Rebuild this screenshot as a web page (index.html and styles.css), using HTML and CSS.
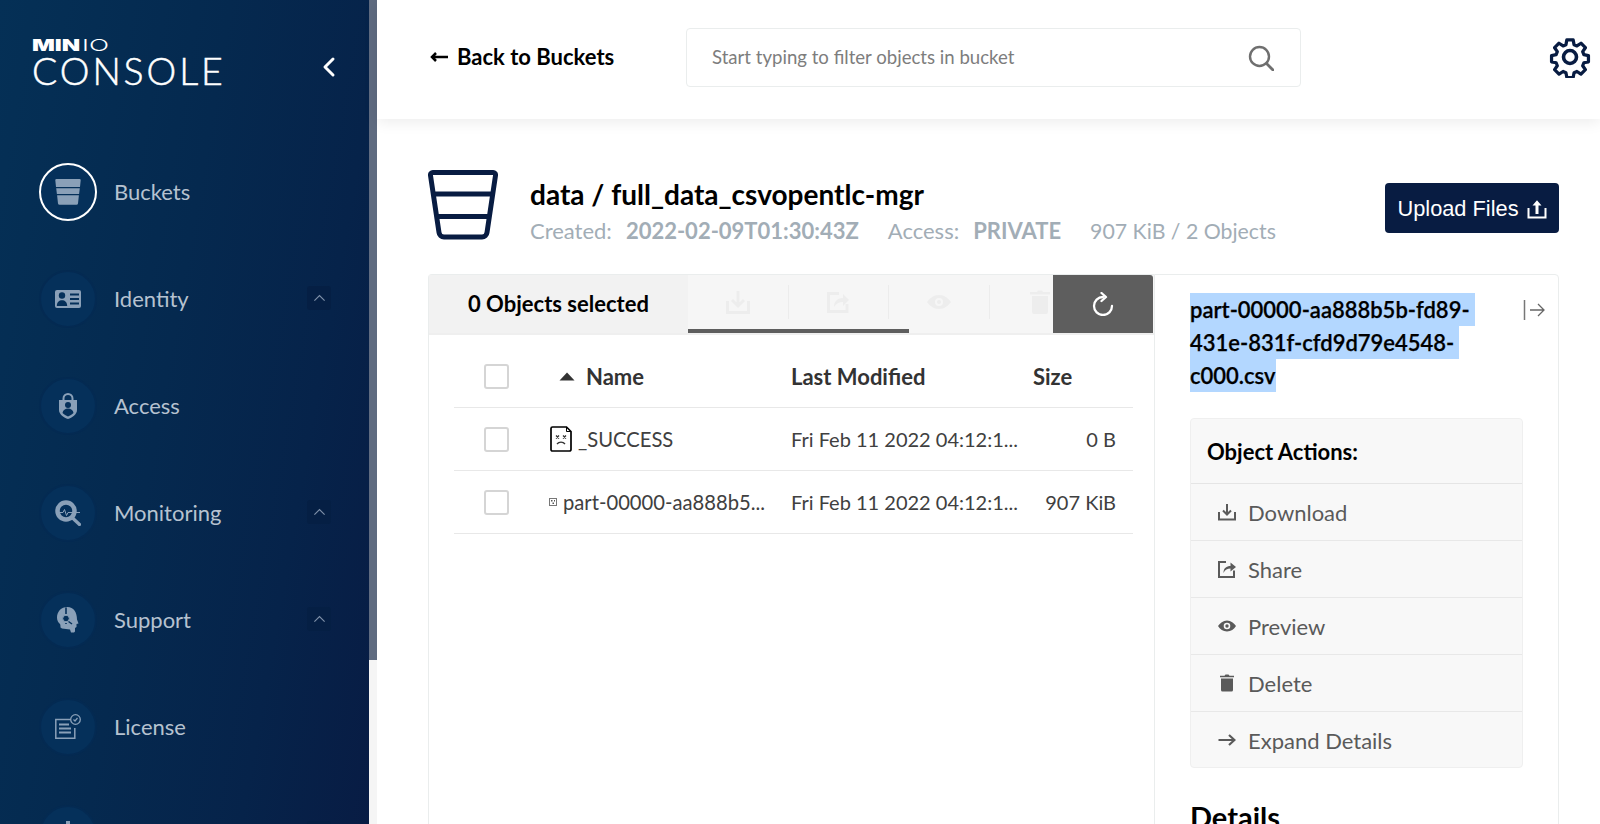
FILE: index.html
```html
<!DOCTYPE html>
<html lang="en">
<head>
<meta charset="utf-8">
<title>MinIO Console</title>
<link rel="stylesheet" href="styles.css">
</head>
<body>
<div class="app">
  <aside class="sidebar">
    <div class="brand">
      <div class="logo">
        <div class="logo-top"><span class="logo-min">MIN</span><span class="logo-io">IO</span></div>
        <div class="logo-console">CONSOLE</div>
      </div>
      <svg class="collapse" viewBox="0 0 14 22"><path d="M11 3 3 11l8 8" fill="none" stroke="#fff" stroke-width="3" stroke-linecap="round" stroke-linejoin="round"/></svg>
    </div>
    <nav class="nav">
      <div class="nav-item">
        <span class="nav-circle nav-circle-active">
          <svg class="nav-icon" viewBox="0 0 26 26"><path d="M1.500 0h23a1.200 1.200 0 0 1 1.200 1.300L25 8H1L.3 1.300A1.200 1.200 0 0 1 1.500 0ZM1.200 9.200h23.600l-.7 5.800H1.900ZM2.100 16.200h21.800l-.9 8.300a1.600 1.600 0 0 1-1.600 1.300H4.600A1.600 1.600 0 0 1 3 24.500Z" fill="#8aa0b8"/></svg>
        </span>
        <span class="nav-label">Buckets</span>
      </div>
      <div class="nav-item">
        <span class="nav-circle">
          <svg class="nav-icon" viewBox="0 0 26 26"><path d="M2 4h22a2 2 0 0 1 2 2v14a2 2 0 0 1-2 2H2a2 2 0 0 1-2-2V6a2 2 0 0 1 2-2Z" fill="#8aa0b8"/><circle cx="7" cy="9.500" r="3.200" fill="#05305a"/><path d="M1.800 20c0-4 2.400-5.800 5.200-5.800s5.200 1.800 5.200 5.800Z" fill="#05305a"/><path d="M15 8.500h9M15 13h9M15 17.500h9" stroke="#05305a" stroke-width="1.800"/></svg>
        </span>
        <span class="nav-label">Identity</span>
        <span class="nav-toggle"><svg viewBox="0 0 14 8"><path d="m1.500 6.800 5.500-5.300 5.500 5.300" fill="none" stroke="#7d8fa8" stroke-width="1.300"/></svg></span>
      </div>
      <div class="nav-item">
        <span class="nav-circle">
          <svg class="nav-icon" viewBox="0 0 26 26"><path d="M13 0a5.500 5.500 0 0 1 5.500 5.500V7h3.500v10c0 4.500-5 7.700-9 9-4-1.300-9-4.500-9-9V7h3.500V5.500A5.500 5.500 0 0 1 13 0Zm0 2a3.500 3.500 0 0 0-3.500 3.500V7h7V5.500A3.500 3.500 0 0 0 13 2Z" fill="#8aa0b8"/><circle cx="13" cy="12" r="3" fill="#05305a"/><path d="M7.500 20c.4-3 2.800-4.500 5.500-4.500s5.100 1.500 5.500 4.500c-1.500 1.500-3.500 2.800-5.500 3.500-2-.7-4-2-5.500-3.500Z" fill="#05305a"/></svg>
        </span>
        <span class="nav-label">Access</span>
      </div>
      <div class="nav-item">
        <span class="nav-circle">
          <svg class="nav-icon" viewBox="0 0 26 26"><circle cx="11" cy="11" r="8.500" fill="none" stroke="#8aa0b8" stroke-width="4.500"/><path d="m16.500 17 8 7.500" stroke="#8aa0b8" stroke-width="3.200" stroke-linecap="round"/><path d="M5 12.500h3l1.500-3 2 6 1.500-3h12" fill="none" stroke="#8aa0b8" stroke-width="1"/></svg>
        </span>
        <span class="nav-label">Monitoring</span>
        <span class="nav-toggle"><svg viewBox="0 0 14 8"><path d="m1.500 6.800 5.500-5.300 5.500 5.300" fill="none" stroke="#7d8fa8" stroke-width="1.300"/></svg></span>
      </div>
      <div class="nav-item">
        <span class="nav-circle">
          <svg class="nav-icon" viewBox="0 0 26 26"><path d="M12.500 0C6 0 2 4.800 2 10.500c0 3 1.200 5 3 6.500.5 1 .5 2.500.5 3.500l1.500 1 8 1 1 3h3l1-1v-3.500l1.500-1V17l2-.5-1.500-4C22 5 18.500 0 12.500 0Z" fill="#8aa0b8"/><path d="M11 .5v6.500M11 17v-1" stroke="#05305a" stroke-width="1.600"/><circle cx="11" cy="11.500" r="3.300" fill="#05305a" stroke="#8aa0b8" stroke-width="1"/><path d="M13.500 14.500 17 17" stroke="#05305a" stroke-width="1.500"/></svg>
        </span>
        <span class="nav-label">Support</span>
        <span class="nav-toggle"><svg viewBox="0 0 14 8"><path d="m1.500 6.800 5.500-5.300 5.500 5.300" fill="none" stroke="#7d8fa8" stroke-width="1.300"/></svg></span>
      </div>
      <div class="nav-item">
        <span class="nav-circle">
          <svg class="nav-icon" viewBox="0 0 26 26"><path d="M16 5.500H.8v18.700h19V14" fill="none" stroke="#8aa0b8" stroke-width="1.500"/><path d="M4 10.500h10M4 14.500h12M4 18.500h12" stroke="#8aa0b8" stroke-width="1.800"/><circle cx="20.500" cy="5.500" r="4.800" fill="none" stroke="#8aa0b8" stroke-width="1.300"/><path d="m18.500 5.500 1.500 1.500 2.500-3" fill="none" stroke="#8aa0b8" stroke-width="1.200"/></svg>
        </span>
        <span class="nav-label">License</span>
      </div>
      <div class="nav-item">
        <span class="nav-circle">
          <svg class="nav-icon" viewBox="0 0 26 26"><path d="M11 0h4v6h-4ZM6 8h14v10H6Z" fill="#8aa0b8"/></svg>
        </span>
        <span class="nav-label"></span>
        <span class="nav-toggle"></span>
      </div>
    </nav>
  </aside>
  <div class="scroll-track"><div class="scroll-thumb"></div></div>
  <main class="main">
    <header class="topbar">
      <div class="back"><span class="back-arrow"><svg viewBox="0 0 18 12"><path d="M18 6H2M6 2 2 6l4 4" fill="none" stroke="#000" stroke-width="2.500"/></svg></span>Back to Buckets</div>
      <div class="search">
        <span class="search-text">Start typing to filter objects in bucket</span>
        <svg class="search-icon" viewBox="0 0 26 26"><circle cx="11.500" cy="11.500" r="9.500" fill="none" stroke="#6f6f6f" stroke-width="2.400"/><path d="m18.500 18.500 6.500 6.500" stroke="#6f6f6f" stroke-width="2.800" stroke-linecap="round"/></svg>
      </div>
      <svg class="gear" viewBox="0 0 42 42"><g fill="none" stroke="#081c42" stroke-width="3.600" stroke-linejoin="round"><circle cx="21" cy="21" r="6.500"/><path d="M17.500 2h7l1 5.300 3.200 1.400 4.500-3 4.900 5-3 4.400 1.300 3.300 5.100 1v7l-5.100 1-1.300 3.300 3 4.400-4.900 5-4.500-3-3.200 1.400-1 5.300h-7l-1-5.300-3.200-1.400-4.500 3-4.900-5 3-4.400-1.300-3.300-5.100-1v-7l5.100-1 1.300-3.300-3-4.400 4.900-5 4.500 3 3.200-1.400Z" transform="translate(2.100 2.100) scale(.9)"/></g></svg>
    </header>
    <section class="content">
      <div class="title-row">
        <svg class="bucket" viewBox="0 0 70 70"><path d="M5 2.500h60a2.500 2.500 0 0 1 2.500 3L59 62.500a5 5 0 0 1-5 4.500H16a5 5 0 0 1-5-4.500L2.500 5.500a2.500 2.500 0 0 1 2.500-3ZM5 24h60M9 46.500h52" fill="none" stroke="#081c42" stroke-width="5" stroke-linejoin="round"/></svg>
        <div class="title-block">
          <h1 class="title">data / full_data_csvopentlc-mgr</h1>
          <div class="meta">
            <span>Created:</span><b class="meta-value">2022-02-09T01:30:43Z</b>
            <span class="meta-gap">Access:</span><b class="meta-value">PRIVATE</b>
            <span class="meta-gap meta-usage">907 KiB / 2 Objects</span>
          </div>
        </div>
        <div class="upload">Upload Files
          <svg class="upload-icon" viewBox="0 0 20 20"><path d="M1.500 9v9.500h17V9" fill="none" stroke="#fff" stroke-width="2"/><path d="M10 1.200 14.500 6.500H11.500V15H8.500V6.500H5.500Z" fill="#fff"/></svg>
        </div>
      </div>
      <div class="panels">
        <div class="list-panel">
          <div class="toolbar">
            <div class="selected-count">0 Objects selected</div>
            <div class="tool-group">
              <div class="tools">
                <span class="tool"><svg viewBox="0 0 24 24"><path d="M1.500 11v11.500h21V11" fill="none" stroke="#ededed" stroke-width="3"/><path d="M12 1v14M6 10l6 6 6-6" fill="none" stroke="#ededed" stroke-width="3"/></svg></span>
                <span class="tool"><svg viewBox="0 0 24 24"><path d="M21 14v7.500H2.500V3.500H13" fill="none" stroke="#ededed" stroke-width="3"/><path d="M8 17c0-6 4-9 9-9V4l6 6-6 6v-4c-4 0-7 1.500-9 5Z" fill="#ededed"/></svg></span>
                <span class="tool"><svg viewBox="0 0 24 24"><path fill-rule="evenodd" d="M12 5c5.500 0 9.500 3.500 12 7-2.500 3.500-6.500 7-12 7S2.500 15.500 0 12c2.500-3.500 6.500-7 12-7Zm0 3a4 4 0 1 0 0 8 4 4 0 0 0 0-8Z" fill="#ededed"/><circle cx="12" cy="12" r="2" fill="#ededed"/></svg></span>
                <span class="tool tool-last"><svg viewBox="0 0 24 24"><path d="M4 6h16v16a2 2 0 0 1-2 2H6a2 2 0 0 1-2-2ZM2 2h7l1-1.500h4L15 2h7v2.500H2Z" fill="#ededed"/></svg></span>
              </div>
              <div class="tool-line"><span class="tool-line-active"></span></div>
            </div>
            <div class="refresh"><svg viewBox="0 0 24 24"><path d="M12 5A9 9 0 1 0 21 14" fill="none" stroke="#fff" stroke-width="2.300" stroke-linecap="round"/><path d="M10.500 1 15 5l-4.500 4" fill="none" stroke="#fff" stroke-width="2.300" stroke-linecap="round" stroke-linejoin="round"/></svg></div>
          </div>
          <div class="table">
            <div class="row row-head">
              <span class="cell-check"><span class="checkbox"></span></span>
              <span class="cell-name cell-name-head"><svg class="sort" viewBox="0 0 16 9"><path d="M8 .5 15.500 8.500H.5Z" fill="#333"/></svg>Name</span>
              <span class="cell-date">Last Modified</span>
              <span class="cell-size cell-size-head">Size</span>
            </div>
            <div class="row">
              <span class="cell-check"><span class="checkbox"></span></span>
              <span class="cell-name cell-name-success">
                <svg class="file-icon" viewBox="0 0 22 26"><path d="M2.500 1h14L21 5.500v18a1.500 1.500 0 0 1-1.500 1.500h-17A1.500 1.500 0 0 1 1 23.500v-21A1.500 1.500 0 0 1 2.500 1Z" fill="none" stroke="#000" stroke-width="1.700"/><path d="M16.500 1v4.500H21" fill="none" stroke="#000" stroke-width="1"/><path d="m6 9.500 3 3m0-3-3 3m7-3 3 3m0-3-3 3M7 18c2-2.500 6-2.500 8 0" fill="none" stroke="#333" stroke-width="1.300"/></svg>
                _SUCCESS
              </span>
              <span class="cell-date">Fri Feb 11 2022 04:12:1...</span>
              <span class="cell-size">0 B</span>
            </div>
            <div class="row">
              <span class="cell-check"><span class="checkbox"></span></span>
              <span class="cell-name cell-name-part">
                <svg class="file-mini" viewBox="0 0 8 8"><rect x=".5" y=".5" width="7" height="7" fill="#fff" stroke="#777"/><path d="M2 2h1.500v1.500H2ZM5 2h1v1.500H5ZM3.500 4.500H5V6H3.500Z" fill="#555"/></svg>
                part-00000-aa888b5...
              </span>
              <span class="cell-date">Fri Feb 11 2022 04:12:1...</span>
              <span class="cell-size">907 KiB</span>
            </div>
          </div>
        </div>
        <aside class="detail-panel">
          <div class="detail-head">
            <div class="detail-name">
              <span class="selection sel-1">part-00000-aa888b5b-fd89-</span>
              <span class="selection sel-2">431e-831f-cfd9d79e4548-</span>
              <span class="selection sel-3">c000.csv</span>
            </div>
            <svg class="detail-close" viewBox="0 0 22 22"><path d="M1.500 1v20" stroke="#777" stroke-width="1.500"/><path d="M7 11h14M15 5l6 6-6 6" fill="none" stroke="#666" stroke-width="1.300"/></svg>
          </div>
          <div class="actions">
            <div class="actions-title">Object Actions:</div>
            <div class="action"><svg viewBox="0 0 18 18"><path d="M1 9v7.500h16V9" fill="none" stroke="#5a5a5a" stroke-width="2"/><path d="M9 1v10M5 7.500l4 4 4-4" fill="none" stroke="#5a5a5a" stroke-width="2"/></svg>Download</div>
            <div class="action"><svg viewBox="0 0 18 18"><path d="M16 10.500V17H1V2h7" fill="none" stroke="#5a5a5a" stroke-width="2"/><path d="M5.500 13c0-5 3-7 7-7V2.500L18 7l-5.500 4.500V8.500c-3 0-5.500 1-7 4.500Z" fill="#5a5a5a"/></svg>Share</div>
            <div class="action"><svg viewBox="0 0 18 18"><path fill-rule="evenodd" d="M9 3.500c4 0 7 2.500 9 5.500-2 3-5 5.500-9 5.500S2 12 0 9c2-3 5-5.500 9-5.500Zm0 2.200a3.300 3.300 0 1 0 0 6.600 3.300 3.300 0 0 0 0-6.600Z" fill="#5a5a5a"/><circle cx="9" cy="9" r="1.700" fill="#5a5a5a"/></svg>Preview</div>
            <div class="action"><svg viewBox="0 0 18 18"><path d="M3 4.500h12V16a1.500 1.500 0 0 1-1.500 1.500h-9A1.500 1.500 0 0 1 3 16ZM2 1.700h4.500L7.500.5h3l1 1.200H16v1.600H2Z" fill="#5a5a5a"/></svg>Delete</div>
            <div class="action"><svg viewBox="0 0 18 18"><path d="M.5 9h16M11 4 16.500 9 11 14" fill="none" stroke="#5a5a5a" stroke-width="2.200"/></svg>Expand Details</div>
          </div>
          <h2 class="details-title">Details</h2>
        </aside>
      </div>
    </section>
  </main>
</div>
</body>
</html>
```
FILE: styles.css
```css
* { box-sizing: border-box; }
html, body { margin: 0; height: 824px; overflow: hidden; background: #fff; }
body { font-family: Lato, "Liberation Sans", sans-serif; color: #000; }
.app { display: flex; height: 824px; overflow: hidden; }

.sidebar { flex: 0 0 369px; height: 824px; background: linear-gradient(100deg, #053056 0%, #05294f 45%, #06234a 75%, #081c44 100%); overflow: hidden; color: #fff; }
.brand { display: flex; align-items: flex-start; justify-content: space-between; height: 138px; padding: 38px 33px 0 32px; }
.logo { line-height: 1; }
.logo-top { display: flex; align-items: center; height: 14px; font-family: Inter, sans-serif; font-size: 16.500px; color: #fff; }
.logo-min { display: block; width: 35px; margin-right: 15px; font-weight: 900; transform: scaleX(1.450); transform-origin: left; }
.logo-io { display: block; font-weight: 300; transform: scaleX(1.600); transform-origin: left; }
.logo-console { font-family: Lato, sans-serif; font-weight: 300; font-size: 37.500px; line-height: 38px; margin-top: 0; letter-spacing: 2.900px; color: #fff; -webkit-text-stroke: .5px #fff; }
.collapse { width: 14px; height: 22px; margin-top: 18px; }
.nav { display: flex; flex-direction: column; }
.nav-item { display: flex; align-items: center; height: 107px; flex: 0 0 107px; padding-left: 39px; }
.nav-circle { display: flex; align-items: center; justify-content: center; width: 58px; height: 58px; flex: 0 0 58px; border-radius: 50%; background: #05305a; border: 2px solid #042a52; }
.nav-circle-active { border-color: #fff; }
.nav-icon { width: 26px; height: 26px; }
.nav-label { flex: 1; margin-left: 17px; font-size: 22px; color: #b6c2d0; }
.nav-toggle { display: flex; align-items: center; justify-content: center; width: 24px; height: 24px; margin-right: 38px; margin-bottom: 2px; border-radius: 3px; background: #051f44; }
.nav-toggle svg { width: 13px; height: 8px; }

.scroll-track { flex: 0 0 8px; height: 824px; background: #f5f5f5; }
.scroll-thumb { height: 660px; background: #5f6b80; }

.main { flex: 1; min-width: 0; display: flex; flex-direction: column; height: 824px; }
.topbar { flex: 0 0 119px; display: flex; align-items: center; padding: 0 9px 4px 53px; background: #fff; box-shadow: 0 3px 14px rgba(0,0,0,.08); position: relative; }
.back { display: flex; align-items: center; width: 256px; margin-bottom: 2px; font-size: 22px; font-weight: 700; color: #000; }
.back-arrow { display: flex; margin-right: 9px; }
.back-arrow svg { width: 18px; height: 12px; }
.search { display: flex; align-items: center; justify-content: space-between; width: 615px; height: 59px; padding: 0 26px 0 25px; border: 1px solid #eaeded; border-radius: 4px; font-size: 18.600px; color: #7d7d7d; }
.search-text { margin-bottom: 2px; }
.search-icon { width: 26px; height: 26px; }
.gear { width: 42px; height: 42px; margin-left: auto; margin-bottom: 2px; }

.content { flex: 1; padding: 51px 41px 0 51px; overflow: hidden; }
.title-row { display: flex; align-items: flex-start; height: 104px; }
.bucket { width: 70px; height: 70px; flex: 0 0 70px; }
.title-block { margin-left: 32px; flex: 1; padding-top: 7px; }
.title { margin: 0; font-size: 28px; line-height: 34px; font-weight: 700; color: #000; }
.meta { display: flex; align-items: baseline; margin-top: 7px; font-size: 22px; line-height: 26px; color: #a2adb6; }
.meta-value { margin-left: 14px; font-weight: 700; }
.meta-gap { margin-left: 29px; }
.meta-usage { font-size: 21.300px; }
.upload { display: flex; align-items: center; justify-content: center; gap: 8px; width: 174px; height: 50px; margin-top: 13px; padding-top: 1px; background: #081c42; border-radius: 4px; color: #fff; font-family: "Liberation Sans", Arial, sans-serif; font-size: 21.800px; }
.upload-icon { width: 20px; height: 20px; }

.panels { display: flex; align-items: flex-start; height: 600px; }
.list-panel { flex: 0 0 726px; height: 600px; border: 1px solid #eaeded; border-right: 0; border-radius: 4px 0 0 0; }
.toolbar { display: flex; height: 60px; background: #f6f6f6; border-bottom: 2px solid #efefef; }
.selected-count { flex: 0 0 259px; height: 58px; padding-left: 39px; background: #f2f2f2; font-size: 22px; font-weight: 700; line-height: 58px; }
.tool-group { flex: 0 0 365px; min-width: 0; display: flex; flex-direction: column; height: 60px; }
.tools { display: flex; height: 54px; padding-top: 10px; }
.tool { display: flex; align-items: center; justify-content: center; flex: 0 0 100.500px; height: 34px; border-right: 1px solid #ececec; }
.tool-last { flex: 0 0 63.500px; border-right: 0; justify-content: flex-end; padding-right: 1px; }
.tool svg { width: 24px; height: 24px; }
.tool-line { height: 4px; }
.tool-line-active { display: block; width: 221px; height: 4px; background: #5e5e5e; }
.refresh { flex: 1; display: flex; align-items: center; justify-content: center; height: 58px; margin-right: 1px; background: #5e5e5e; border-radius: 0 3px 0 0; }
.refresh svg { width: 24px; height: 24px; }

.table { padding: 10px 21px 0 25px; }
.row { display: flex; align-items: center; height: 63px; border-bottom: 1px solid #e8e8e8; font-size: 20.200px; color: #404040; }
.row-head { height: 63px; font-size: 22px; font-weight: 700; color: #333; }
.cell-check { flex: 0 0 30px; margin-left: 30px; margin-right: 24px; }
.checkbox { display: block; width: 25px; height: 25px; border: 2px solid #d5d5d5; border-radius: 3px; background: #fff; }
.cell-name { display: flex; align-items: center; flex: 0 0 253px; white-space: nowrap; }
.cell-name-head { padding-left: 21px; }
.cell-name-success { padding-left: 12px; }
.cell-name-part { padding-left: 11px; }
.sort { width: 16px; height: 9px; margin-right: 11px; }
.file-icon { width: 22px; height: 26px; margin-right: 6px; }
.file-mini { width: 8px; height: 8px; margin-right: 6px; }
.cell-date { flex: 0 0 222px; white-space: nowrap; font-size: 20px; }
.row-head .cell-date { font-size: 22px; }
.cell-size { flex: 1; text-align: right; padding-right: 17px; font-size: 20px; }
.cell-size-head { text-align: left; padding: 0 0 0 20px; font-size: 22px; }

.detail-panel { flex: 1; height: 600px; border: 1px solid #eaeded; border-radius: 0 4px 0 0; padding: 18px 0 0 35px; overflow: hidden; }
.detail-head { display: flex; justify-content: space-between; height: 125px; padding-right: 13px; }
.detail-name { font-size: 22px; font-weight: 600; color: #000; -webkit-text-stroke: .25px #000; }
.selection { display: block; height: 33px; line-height: 33px; background: #b3d7ff; width: max-content; white-space: nowrap; }
.sel-1 { padding-right: 5px; }
.sel-2 { padding-right: 5px; }
.detail-close { width: 22px; height: 22px; margin-top: 6px; }
.actions { width: 333px; height: 350px; background: #f8f8f8; border-radius: 4px; border: 1px solid #efefef; }
.actions-title { height: 65px; padding-left: 16px; font-size: 22px; font-weight: 700; line-height: 65px; border-bottom: 1px solid #e5e5e5; }
.action { display: flex; align-items: center; height: 57px; padding-left: 27px; font-size: 22px; color: #5a5a5a; border-bottom: 1px solid #e8e8e8; }
.action:last-child { border-bottom: 0; height: 56px; }
.action svg { width: 18px; height: 18px; margin-right: 12px; }
.details-title { margin: 31px 0 0; font-size: 29px; line-height: 36px; font-weight: 700; color: #000; }
```
